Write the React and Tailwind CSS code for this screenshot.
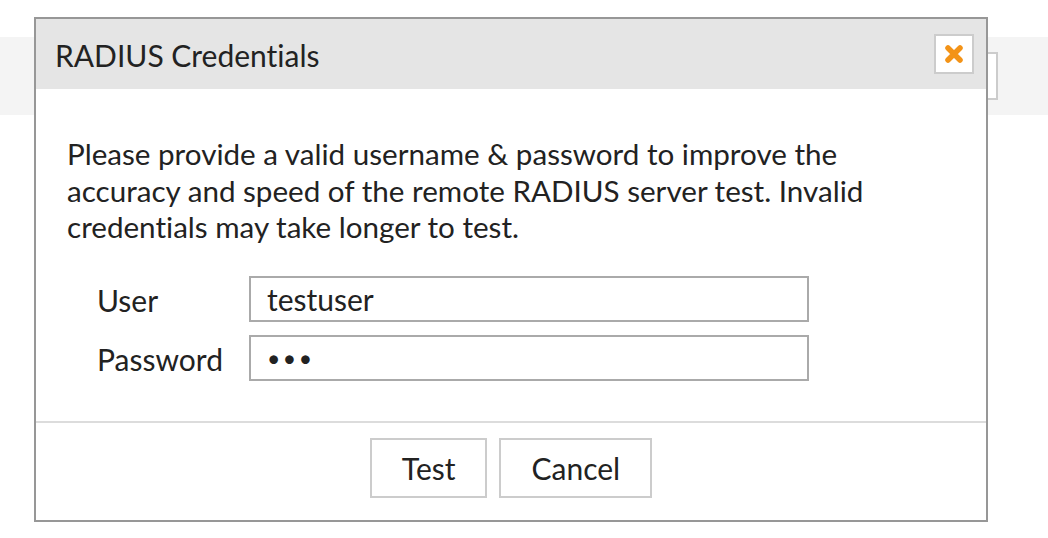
import { useState } from "react";

function CloseIcon() {
  return (
    <svg width="20" height="20" viewBox="0 0 20 20">
      <path
        d="M4 4L16 16M16 4L4 16"
        stroke="#f39317"
        strokeWidth="5.5"
        strokeLinecap="round"
        fill="none"
      />
    </svg>
  );
}

export default function App() {
  const [user, setUser] = useState("testuser");
  const [password, setPassword] = useState("abc");

  return (
    <div className="relative w-[1048px] h-[538px] overflow-hidden bg-white font-[Lato,sans-serif] text-[#222] [font-variant-ligatures:none]">
      {/* page behind the modal */}
      <div className="mt-[37px] h-[78px] bg-[#f4f4f4] flex items-center">
        <div className="ml-auto mr-[50px] w-[300px] h-[48px] border-2 border-[#cccccc] bg-white" />
      </div>

      {/* modal */}
      <div className="absolute left-[34px] top-[17px] w-[954px] h-[505px] border-2 border-[#979797] bg-white flex flex-col">
        <div className="h-[70px] shrink-0 bg-[#e5e5e5] flex items-center pl-[19px] pr-[12px]">
          <h2 className="text-[30px] leading-none pt-[2px]">RADIUS Credentials</h2>
          <button className="ml-auto w-[40px] h-[40px] border-2 border-[#cccccc] bg-white flex items-center justify-center">
            <CloseIcon />
          </button>
        </div>

        <div className="flex-1 pl-[31px] pr-[50px] pt-[47px]">
          <p className="text-[29.6px] leading-[36.5px]">
            Please provide a valid username &amp; password to improve the accuracy and speed of the
            remote RADIUS server test. Invalid credentials may take longer to test.
          </p>

          <div className="mt-[30px] pl-[30px] flex flex-col gap-[12px]">
            <div className="flex items-center">
              <label className="w-[152px] text-[30px] pt-[2px]">User</label>
              <input
                value={user}
                onChange={(e) => setUser(e.target.value)}
                className="w-[560px] h-[46px] border-2 border-[#aaaaaa] px-[16px] text-[30px] text-[#222] outline-none"
              />
            </div>
            <div className="flex items-center">
              <label className="w-[152px] text-[30px] pt-[2px]">Password</label>
              <input
                type="password"
                value={password}
                onChange={(e) => setPassword(e.target.value)}
                className="w-[560px] h-[46px] border-2 border-[#aaaaaa] px-[16px] text-[23px] tracking-[2.5px] text-[#222] outline-none"
              />
            </div>
          </div>
        </div>

        <div className="h-[99px] shrink-0 border-t-2 border-[#dcdcdc] pt-[15px] flex justify-center gap-[12px]">
          <button className="h-[60px] px-[30px] border-2 border-[#cccccc] bg-white text-[30px]">Test</button>
          <button className="h-[60px] px-[30px] border-2 border-[#cccccc] bg-white text-[30px]">Cancel</button>
        </div>
      </div>
    </div>
  );
}
